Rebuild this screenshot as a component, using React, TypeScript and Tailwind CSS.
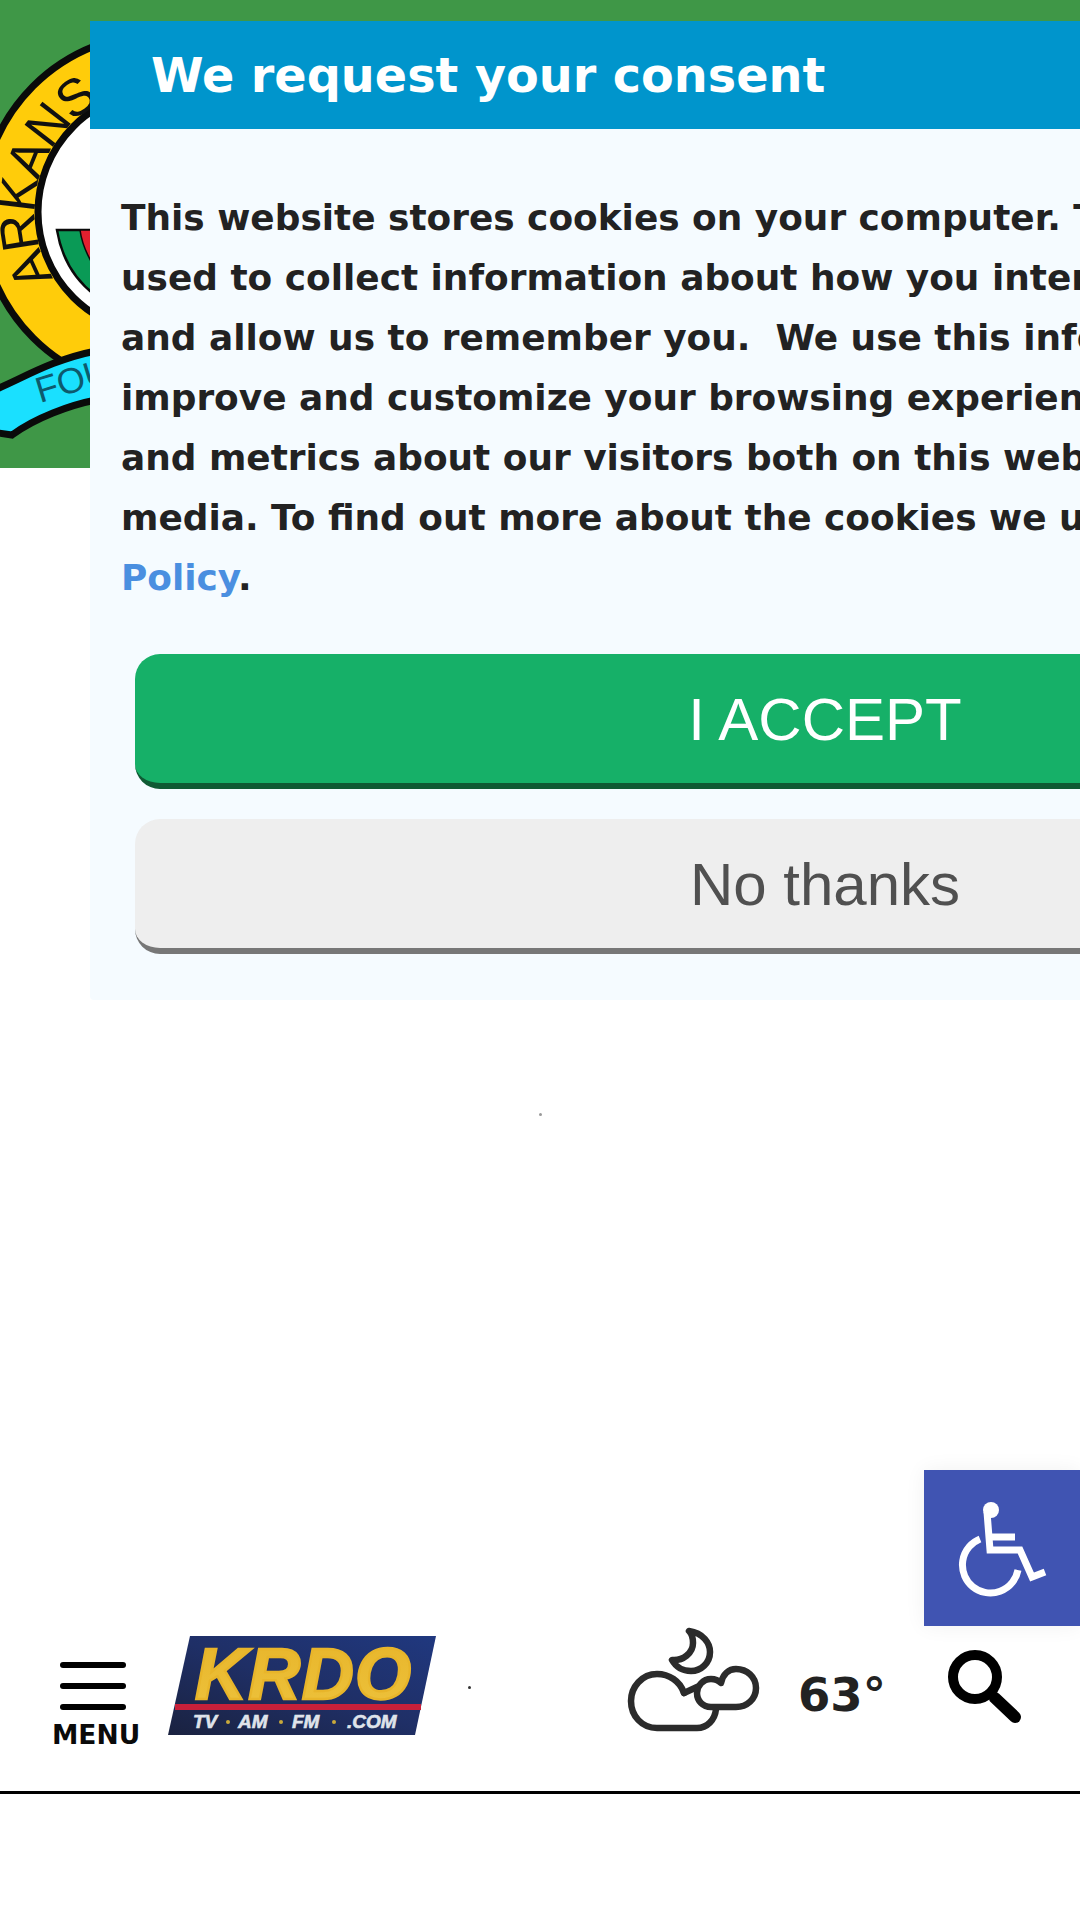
export default function App() {
  return (
    <div className="relative w-[1080px] h-[1920px] overflow-hidden bg-white font-['DejaVu_Sans',sans-serif]">
      <div className="h-[468px] bg-[#3f9747]">
        <svg width="100" height="468" viewBox="0 0 100 468" className="block">
          <circle cx="159" cy="212" r="178" fill="#ffcc0a" stroke="#0a0a0a" strokeWidth="7" />
          <circle cx="159" cy="212" r="121" fill="#ffffff" stroke="#0a0a0a" strokeWidth="7" />
          <path d="M57 230 L95 230 L95 295 C75 280 62 260 57 230 Z" fill="#0a9a56" stroke="#0a0a0a" strokeWidth="2.5" />
          <path d="M80 230 L95 230 L95 268 C88 257 82 245 80 230 Z" fill="#e3202f" stroke="#0a0a0a" strokeWidth="1.5" />
          <path id="arkansasArc" d="M54 278 A124 124 0 0 1 159 88" fill="none" />
          <text fontFamily="'Liberation Sans',sans-serif" fontSize="52" letterSpacing="-2" fill="#111111">
            <textPath href="#arkansasArc">ARKANSAS</textPath>
          </text>
          <path d="M-8 391 C20 380 50 360 96 351 L96 400 C70 405 35 418 12 435 L-8 432 Z" fill="#1ae0ff" stroke="#0a0a0a" strokeWidth="7" />
          <text x="40" y="403" transform="rotate(-17 40 403)" fontFamily="'Liberation Sans',sans-serif" fontSize="36" fill="#0d5a6e">FOU</text>
        </svg>
      </div>

      <div className="h-[1152px] pt-[645px] flex justify-center">
        <div className="w-[3px] h-[3px] rounded-full bg-[#999999]" />
      </div>

      <nav className="h-[174px] border-b-[3px] border-black flex items-start">
        <button className="ml-[52px] mt-[42px] w-[87px] flex flex-col items-start">
          <span className="ml-[8px] w-[66px] h-[6px] rounded-full bg-black" />
          <span className="ml-[8px] w-[66px] h-[6px] rounded-full bg-black mt-[15px]" />
          <span className="ml-[8px] w-[66px] h-[6px] rounded-full bg-black mt-[15px]" />
          <span className="text-[26.5px] leading-[30px] font-bold text-[#0a0a0a] mt-[10px] whitespace-nowrap">MENU</span>
        </button>

        <svg width="268" height="99" viewBox="0 0 268 99" className="ml-[29px] mt-[16px] shrink-0">
          <defs>
            <linearGradient id="logoBg" x1="0" y1="1" x2="1" y2="0">
              <stop offset="0" stopColor="#1a2240" />
              <stop offset="0.5" stopColor="#1f2f66" />
              <stop offset="1" stopColor="#20387f" />
            </linearGradient>
            <linearGradient id="logoGold" x1="0" y1="0" x2="0" y2="1">
              <stop offset="0" stopColor="#e8b52a" />
              <stop offset="1" stopColor="#edc23c" />
            </linearGradient>
          </defs>
          <path d="M22 0 H268 L247 99 H0 Z" fill="url(#logoBg)" />
          <text x="27" y="63" textLength="216" fontFamily="'Liberation Sans',sans-serif" fontWeight="700" fontStyle="italic" fontSize="72" fill="url(#logoGold)" stroke="#e8b52a" strokeWidth="2.5">KRDO</text>
          <rect x="7" y="68" width="246" height="6" fill="#c8203a" />
          <g fontFamily="'Liberation Sans',sans-serif" fontWeight="700" fontStyle="italic" fontSize="19" fill="#dfe3ea" stroke="#dfe3ea" strokeWidth="0.6">
            <text x="25" y="92">TV</text>
            <text x="70" y="92">AM</text>
            <text x="124" y="92">FM</text>
            <text x="179" y="92">.COM</text>
          </g>
          <circle cx="60" cy="86" r="2" fill="#c9a93a" />
          <circle cx="113" cy="86" r="2" fill="#c9a93a" />
          <circle cx="166" cy="86" r="2" fill="#c9a93a" />
        </svg>

        <div className="ml-[32px] mt-[66px] w-[3px] h-[3px] rounded-full bg-[#333333]" />

        <svg width="136" height="110" viewBox="0 0 136 110" fill="none" stroke="#2b2b2b" strokeWidth="6.5" strokeLinejoin="round" strokeLinecap="round" className="ml-[156px] mt-[7px] shrink-0">
          <path d="M62 4 C76 6 83 16 83 25 C83 36 74 44 64 44 C56 44 49 40 45 33 C56 34 66 26 66 16 C66 11 65 7 62 4 Z" />
          <path d="M57 66 C53 54 42 47 30 47 C15 47 4 60 4 74 C4 89 15 101 30 101 L70 101 C80 101 88 93 89 82" />
          <path d="M57 66 L70 60" />
          <path d="M84 52 C76 52 70 59 70 66 C70 74 76 80 84 80 L109 80 C120 80 129 72 129 61 C129 50 120 42 109 42 C102 42 96 47 94 56 C91 53 88 52 84 52 Z" />
        </svg>

        <div className="ml-[35px] mt-[48px] text-[46.5px] leading-[54px] font-bold text-[#222222]">63°</div>

        <svg width="85" height="85" viewBox="0 0 85 85" fill="none" stroke="#000000" className="ml-[54px] mt-[25px] shrink-0">
          <circle cx="35" cy="32" r="22" strokeWidth="10" />
          <path d="M55 53 L75 72" strokeWidth="12" strokeLinecap="round" />
        </svg>
      </nav>

      <div className="absolute left-[90px] top-[21px] w-[1470px] h-[979px] rounded-b-[4px] bg-[#f5fbff]">
        <div className="h-[108px] bg-[#0095cc] pl-[61px] flex items-center">
          <h2 className="text-[47.7px] leading-[56px] mt-[1px] font-bold text-white whitespace-nowrap">We request your consent</h2>
        </div>
        <p className="mt-[59px] px-[31px] text-[35.9px] leading-[60px] font-bold text-[#222222] whitespace-nowrap">
          This website stores cookies on your computer. These cookies are<br />
          used to collect information about how you interact with our website<br />
          and allow us to remember you.{"\u00a0 "}We use this information in order to<br />
          improve and customize your browsing experience and for analytics<br />
          and metrics about our visitors both on this website and other<br />
          media. To find out more about the cookies we use, see our <span className="text-[#4a8fe0]">Privacy</span><br />
          <span className="text-[#4a8fe0]">Policy</span>.
        </p>
        <div className="mt-[46px] mx-[45px] flex flex-col gap-[30px] font-['Liberation_Sans',sans-serif]">
          <div className="h-[135px] pt-[2px] rounded-[25px] bg-[#16b068] border-b-[6px] border-[#0f5a34] flex items-center justify-center text-[60px] text-white">I ACCEPT</div>
          <div className="h-[135px] pt-[2px] rounded-[25px] bg-[#eeeeee] border-b-[6px] border-[#777777] flex items-center justify-center text-[60px] text-[#505050]">No thanks</div>
        </div>
      </div>

      <div className="absolute right-0 top-[1470px] w-[156px] h-[156px] bg-[#4054b2] shadow-[0_0_20px_rgba(0,0,0,0.06)]">
        <svg width="156" height="156" viewBox="0 0 156 156" fill="none" stroke="#ffffff" strokeWidth="7">
          <circle cx="67" cy="40" r="8" fill="#ffffff" stroke="none" />
          <path d="M63 42 L66 80 H96 L108 107 L121 102" />
          <path d="M67 67 H91" />
          <path d="M56 69 A28 28 0 1 0 94 100" />
        </svg>
      </div>
    </div>
  );
}
